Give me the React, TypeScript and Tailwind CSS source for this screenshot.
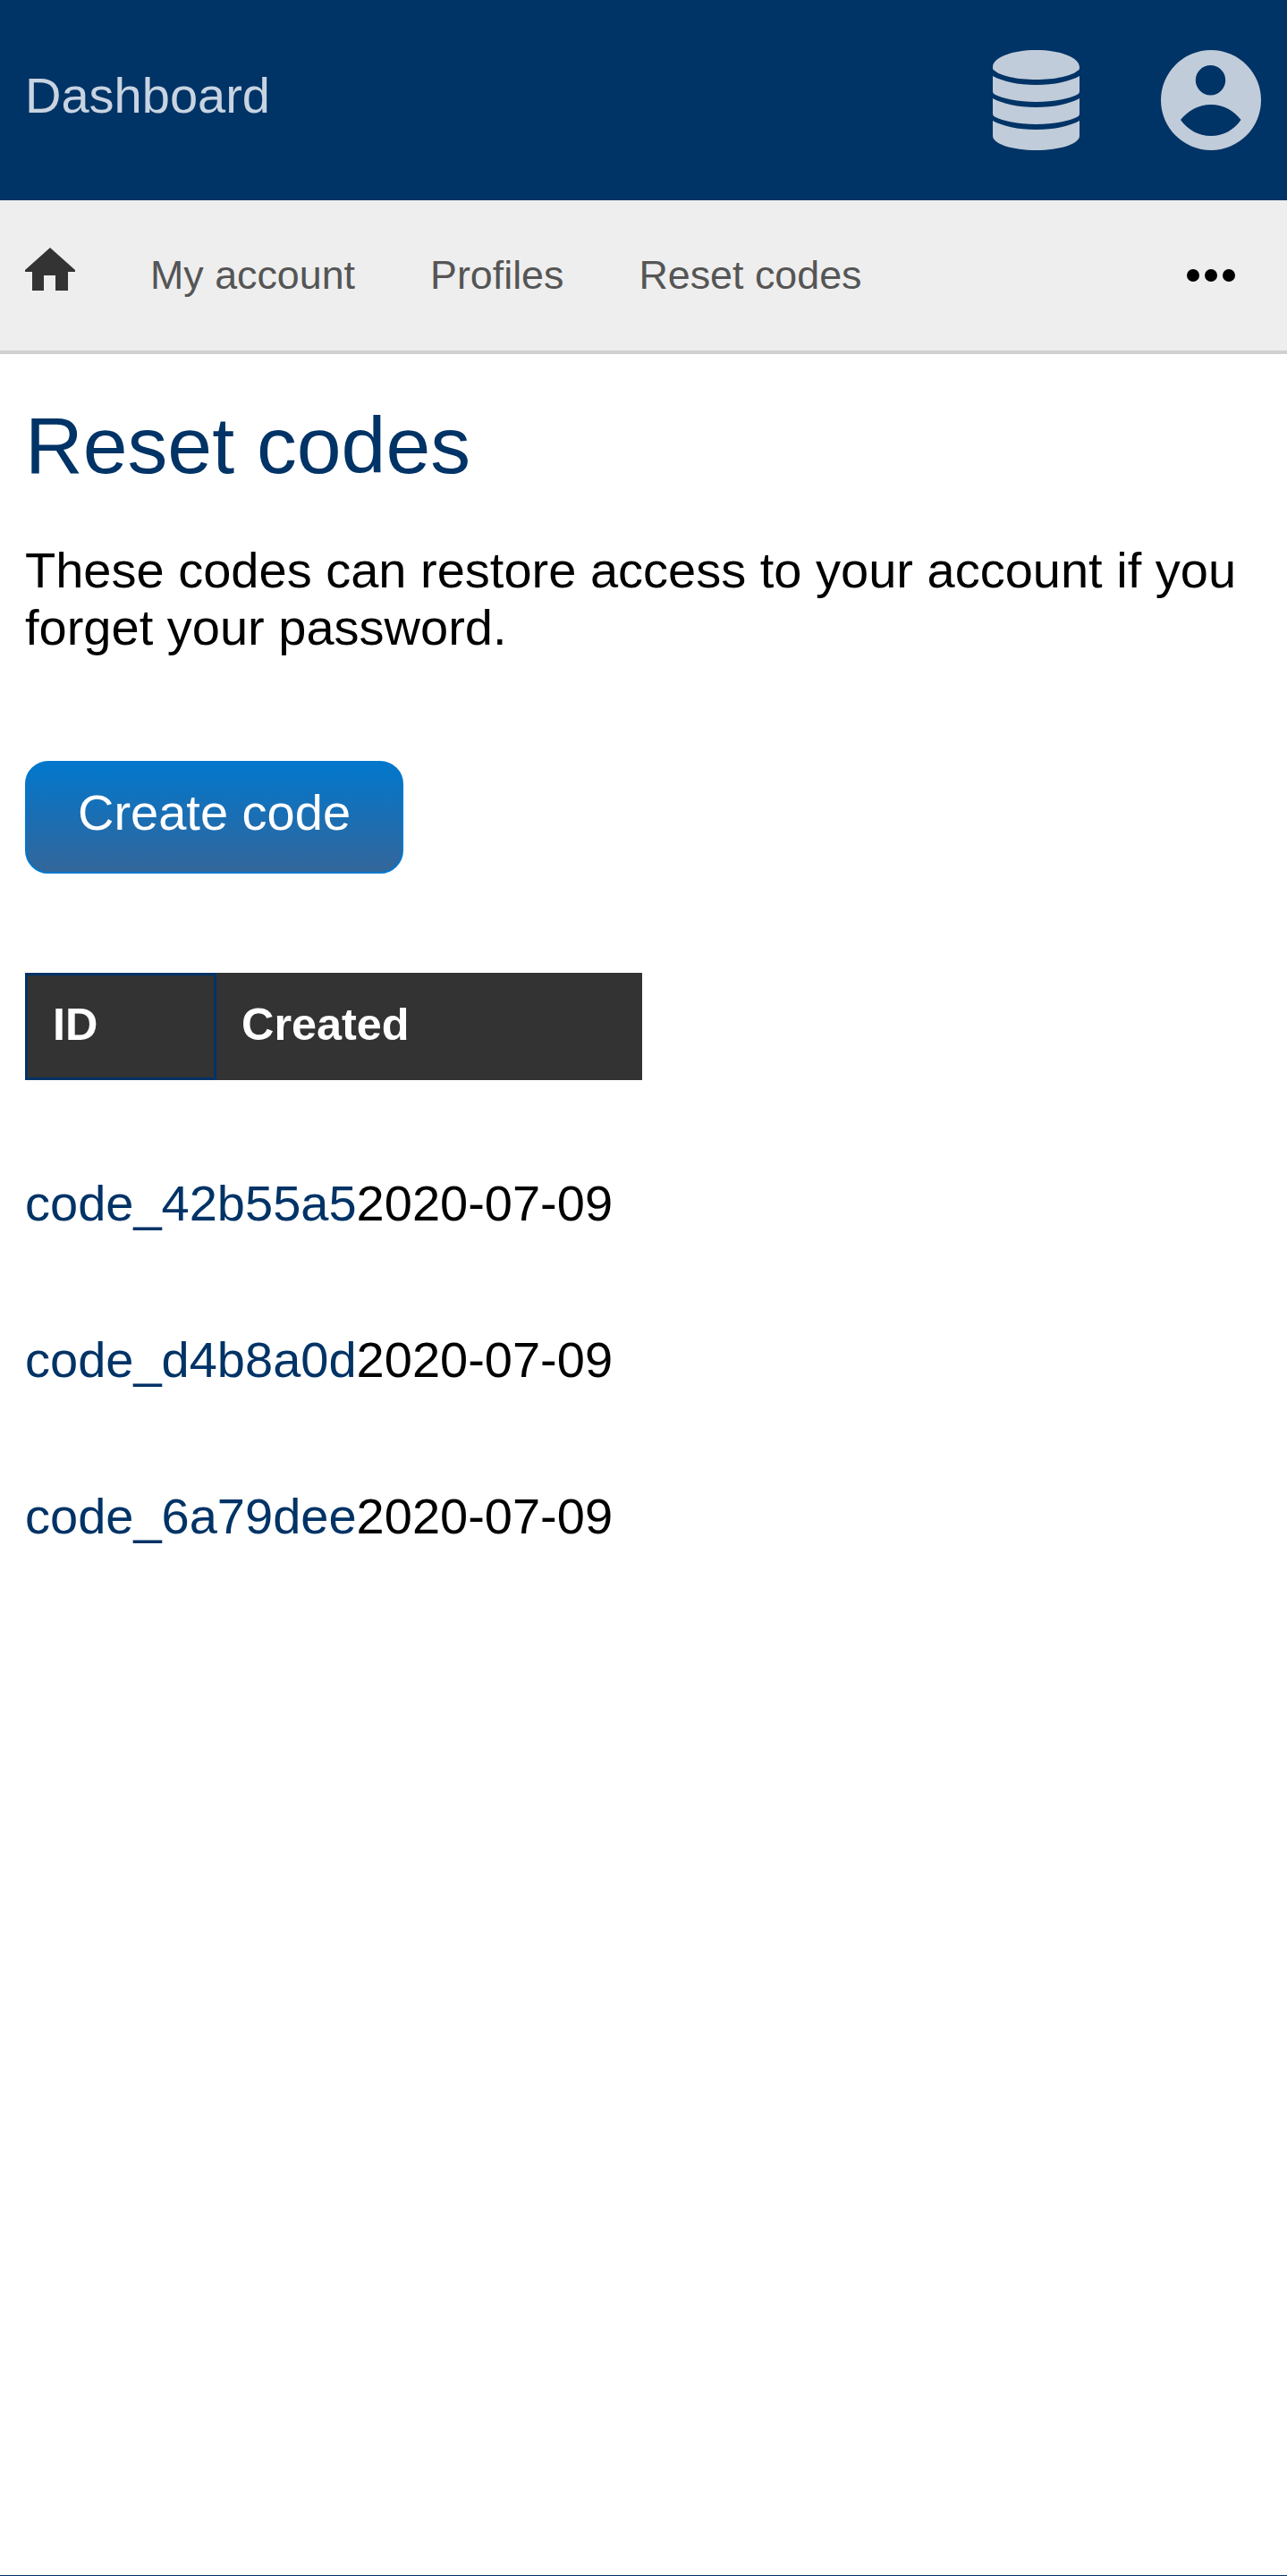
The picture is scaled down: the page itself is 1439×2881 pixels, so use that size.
const CODES = ['code_42b55a5', 'code_d4b8a0d', 'code_6a79dee'];

function DatabaseIcon() {
  return (
    <svg viewBox="0 0 97 112" className="h-[112px] w-[97px] fill-[#c0ccd9]">
      <path d="M48.5 0C75 0 97 8 97 19C97 21 97 22 95 23C88 29 70 33 48.5 33C27 33 9 29 2 23C0 22 0 21 0 19C0 8 22 0 48.5 0Z" />
      <path d="M0 29C11 35 28 39 48.5 39C69 39 86 35 97 29V46C97 48 96 49 94 50C86 54 69 58 48.5 58C28 58 11 54 3 50C1 49 0 48 0 46Z" />
      <path d="M0 54C11 60 28 64 48.5 64C69 64 86 60 97 54V71C97 73 96 74 94 75C86 79 69 83 48.5 83C28 83 11 79 3 75C1 74 0 73 0 71Z" />
      <path d="M0 79C11 85 28 89 48.5 89C69 89 86 85 97 79V96C97 105 75 112 48.5 112C22 112 0 105 0 96Z" />
    </svg>
  );
}

function UserIcon() {
  return (
    <svg viewBox="0 0 112 112" className="h-[112px] w-[112px]">
      <path
        className="fill-[#c0ccd9]"
        fillRule="evenodd"
        d="M56 0A56 56 0 1 1 56 112A56 56 0 1 1 56 0ZM55.5 17A16.7 16.7 0 1 0 55.5 50.4A16.7 16.7 0 1 0 55.5 17ZM22 78C30 68 42 61 56 61C70 61 82 68 89.5 78C82 89 70 96 56 96C42 96 30 89 22 78Z"
      />
    </svg>
  );
}

function HomeIcon() {
  return (
    <svg viewBox="0 0 56 48" className="mb-[14px] h-[48px] w-[56px] fill-[#333333]">
      <path d="M28 0L56 25V27H48V48H34V31H21V48H8V27H0V25Z" />
    </svg>
  );
}

export default function App() {
  return (
    <div className="flex min-h-[2881px] flex-col border-b border-[#003366] bg-white font-['Liberation_Sans',Arial,sans-serif] text-[56px] text-black">
      <header className="flex h-[224px] items-center bg-[#003366] pl-[28px] pr-[29px]">
        <span className="mb-[10px] flex-1 text-[56px] leading-none text-[#c8d4e1]">Dashboard</span>
        <div className="mr-[91px]">
          <DatabaseIcon />
        </div>
        <UserIcon />
      </header>

      <nav className="flex h-[172px] items-center border-b-4 border-[#d0d0d0] bg-[#eeeeee] pl-[28px] pr-[29px] text-[44.8px] text-[#555555]">
        <HomeIcon />
        <a className="ml-[84px]">My account</a>
        <a className="ml-[84px]">Profiles</a>
        <a className="ml-[84px]">Reset codes</a>
        <div className="ml-auto flex w-[112px] items-center justify-center gap-[6px]">
          <span className="h-[14px] w-[14px] rounded-full bg-black" />
          <span className="h-[14px] w-[14px] rounded-full bg-black" />
          <span className="h-[14px] w-[14px] rounded-full bg-black" />
        </div>
      </nav>

      <main className="px-[28px]">
        <h1 className="mt-[58px] text-[89.6px] leading-none text-[#003366]">Reset codes</h1>
        <p className="mt-[62px] leading-[64px]">
          These codes can restore access to your account if you
          <br />
          forget your password.
        </p>
        <button className="mt-[117px] block h-[126px] w-[423px] rounded-[26px] border-2 border-[#0277cc] bg-[linear-gradient(#0277cc,#33669a)] pb-[10px] text-white">
          Create code
        </button>
        <div className="mt-[111px] flex h-[120px] w-[690px] items-center bg-[#333333] text-[50.4px] font-bold text-white">
          <div className="flex h-full w-[214px] items-center border-[3px] border-[#003366] pb-[3px] pl-[28px]">ID</div>
          <div className="pb-[3px] pl-[28px]">Created</div>
        </div>
        <div className="mt-[106px] flex flex-col gap-[111px]">
          {CODES.map((code) => (
            <div key={code} className="flex h-[64px] items-center">
              <a className="text-[#003366]">{code}</a>
              <span>2020-07-09</span>
            </div>
          ))}
        </div>
      </main>
    </div>
  );
}
